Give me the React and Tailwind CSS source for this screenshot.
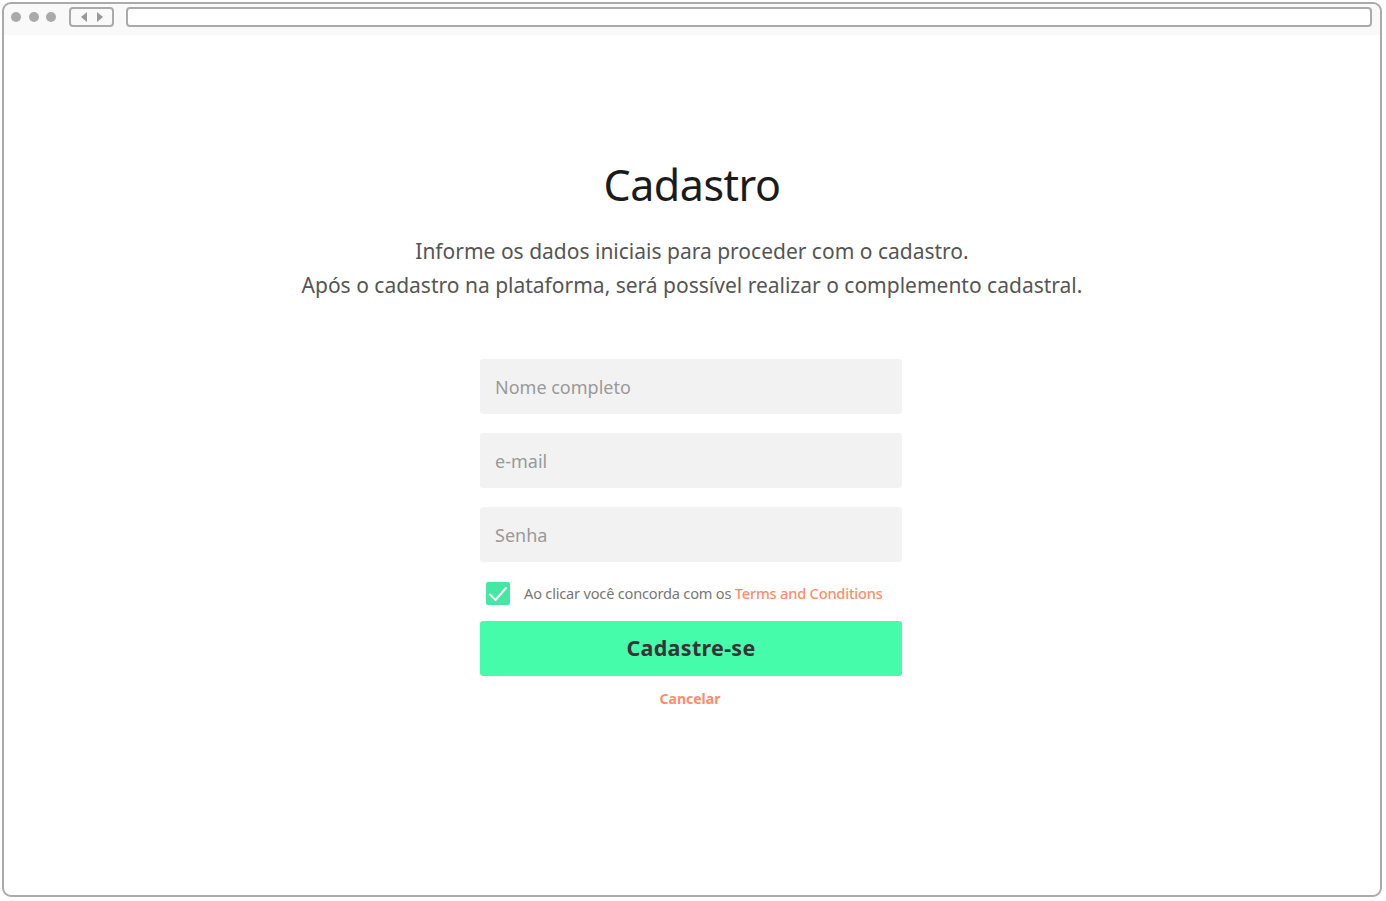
import { useState } from 'react';

function BrowserBar() {
  return (
    <div className="h-[31px] shrink-0 bg-[#f9f9f9] flex items-start pt-[3px] pl-[7px] pr-[8px] rounded-t-[8px]">
      <div className="h-[20px] flex items-center gap-[7.5px]">
        <span className="w-[10px] h-[10px] rounded-full bg-[#aaaaaa]" />
        <span className="w-[10px] h-[10px] rounded-full bg-[#aaaaaa]" />
        <span className="w-[10px] h-[10px] rounded-full bg-[#aaaaaa]" />
      </div>
      <div className="ml-[13px] w-[45px] h-[20px] border-2 border-[#aaaaaa] rounded-[4px] flex items-center justify-center gap-[8px]">
        <svg width="7" height="10" viewBox="0 0 7 10"><path d="M6 0 L0 5 L6 10 Z" fill="#999" /></svg>
        <svg width="7" height="10" viewBox="0 0 7 10"><path d="M1 0 L7 5 L1 10 Z" fill="#999" /></svg>
      </div>
      <div className="ml-[12px] flex-1 h-[20px] border-2 border-[#aaaaaa] rounded-[4px] bg-white" />
    </div>
  );
}

function Field({ placeholder, type = 'text' }) {
  return (
    <input
      type={type}
      placeholder={placeholder}
      className="w-full h-[55px] rounded-[3px] bg-[#f2f2f2] px-[15px] text-[18px] text-[#555] placeholder:text-[#999] outline-none"
    />
  );
}

export default function App() {
  const [agree, setAgree] = useState(true);

  return (
    <div className="w-[1386px] h-[901px] bg-white pl-[2px] pr-[4px] pb-[4px] pt-[2px]" style={{ fontFamily: '"Noto Sans", "Open Sans", sans-serif' }}>
      <div className="h-full border-2 border-[#aaaaaa] rounded-[9px] flex flex-col overflow-hidden">
        <BrowserBar />
        <main className="flex-1 flex flex-col items-center pt-[120px]">
          <h1 className="text-[43px] leading-[60px] text-[#1b1b1b] font-normal tracking-[-0.5px]">Cadastro</h1>
          <p className="mt-[19px] text-center text-[21px] leading-[34px] text-[#555]">
            Informe os dados iniciais para proceder com o cadastro.<br />
            Após o cadastro na plataforma, será possível realizar o complemento cadastral.
          </p>

          <form className="mt-[57px] w-[422px] -translate-x-[1px] flex flex-col gap-[19px]" onSubmit={(e) => e.preventDefault()}>
            <Field placeholder="Nome completo" />
            <Field placeholder="e-mail" type="email" />
            <Field placeholder="Senha" type="password" />
          </form>

          <label className="mt-[20px] w-[422px] pl-[5px] flex items-center gap-[14px] cursor-pointer">
            <button
              type="button"
              onClick={() => setAgree(!agree)}
              className={'w-[24px] h-[23px] rounded-[2px] grid place-items-center ' + (agree ? 'bg-[#45e8a2]' : 'bg-[#e5e5e5]')}
            >
              {agree && (
                <svg width="20" height="16" viewBox="0 0 20 16" fill="none" stroke="white" strokeWidth="2" strokeLinecap="round" strokeLinejoin="round">
                  <path d="M2 8.5 L7.5 14 L18 2" />
                </svg>
              )}
            </button>
            <span className="text-[14.6px] text-[#777] tracking-[-0.2px]">
              Ao clicar você concorda com os <a className="text-[#ff8c6b] font-medium">Terms and Conditions</a>
            </span>
          </label>

          <button className="mt-[16px] w-[422px] h-[55px] -translate-x-[1px] rounded-[3px] bg-[#45fcaa] text-[21.5px] font-bold text-[#3b3238] tracking-[0.3px]">
            Cadastre-se
          </button>
          <a className="mt-[12px] -translate-x-[2px] text-[14px] font-bold text-[#ff8c6b]">Cancelar</a>
        </main>
      </div>
    </div>
  );
}
